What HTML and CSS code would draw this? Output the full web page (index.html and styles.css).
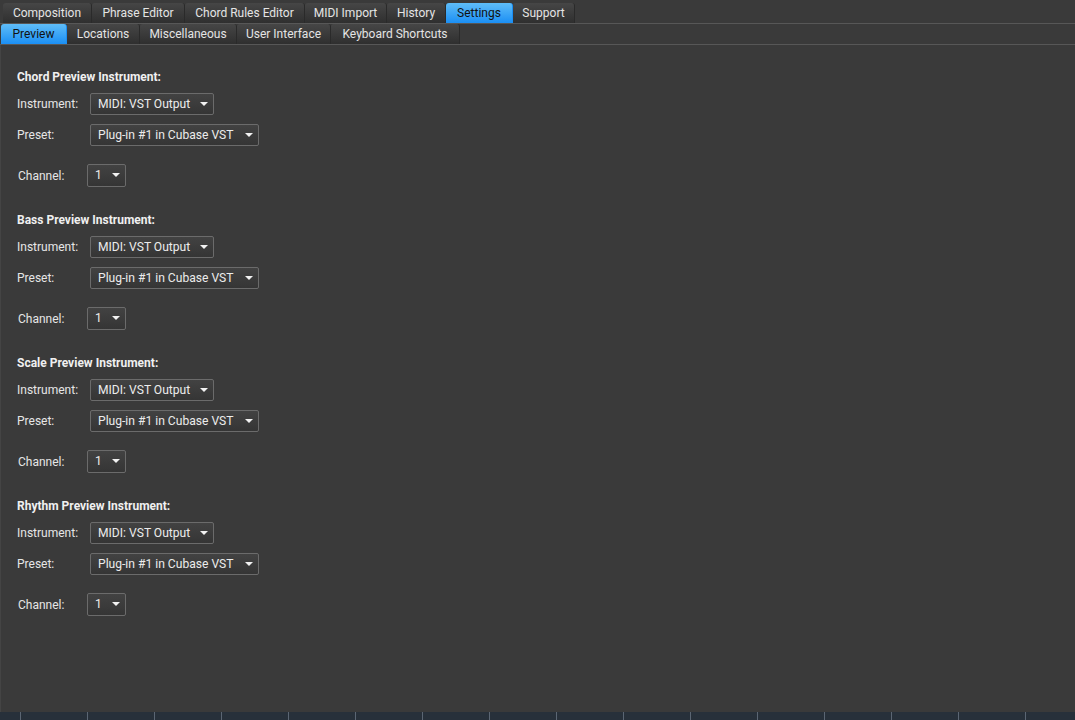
FILE: index.html
```html
<!DOCTYPE html>
<html>
<head>
<meta charset="utf-8">
<link rel="stylesheet" href="styles.css">
</head>
<body>
<div class="app">
  <div class="tabbar main-tabs">
    <div class="tab">Composition</div>
    <div class="tab">Phrase Editor</div>
    <div class="tab">Chord Rules Editor</div>
    <div class="tab">MIDI Import</div>
    <div class="tab">History</div>
    <div class="tab active">Settings</div>
    <div class="tab">Support</div>
  </div>
  <div class="tabbar sub-tabs">
    <div class="tab active first">Preview</div>
    <div class="tab">Locations</div>
    <div class="tab">Miscellaneous</div>
    <div class="tab">User Interface</div>
    <div class="tab">Keyboard Shortcuts</div>
  </div>
  <div class="content">
    <section class="group">
      <h3 class="group-title">Chord Preview Instrument:</h3>
      <div class="row row-inst"><span class="label">Instrument:</span><div class="select w-inst">MIDI: VST Output</div></div>
      <div class="row row-preset"><span class="label">Preset:</span><div class="select w-preset">Plug-in #1 in Cubase VST</div></div>
      <div class="row row-channel"><span class="label ch">Channel:</span><div class="select w-ch">1</div></div>
    </section>
    <section class="group">
      <h3 class="group-title">Bass Preview Instrument:</h3>
      <div class="row row-inst"><span class="label">Instrument:</span><div class="select w-inst">MIDI: VST Output</div></div>
      <div class="row row-preset"><span class="label">Preset:</span><div class="select w-preset">Plug-in #1 in Cubase VST</div></div>
      <div class="row row-channel"><span class="label ch">Channel:</span><div class="select w-ch">1</div></div>
    </section>
    <section class="group">
      <h3 class="group-title">Scale Preview Instrument:</h3>
      <div class="row row-inst"><span class="label">Instrument:</span><div class="select w-inst">MIDI: VST Output</div></div>
      <div class="row row-preset"><span class="label">Preset:</span><div class="select w-preset">Plug-in #1 in Cubase VST</div></div>
      <div class="row row-channel"><span class="label ch">Channel:</span><div class="select w-ch">1</div></div>
    </section>
    <section class="group">
      <h3 class="group-title">Rhythm Preview Instrument:</h3>
      <div class="row row-inst"><span class="label">Instrument:</span><div class="select w-inst">MIDI: VST Output</div></div>
      <div class="row row-preset"><span class="label">Preset:</span><div class="select w-preset">Plug-in #1 in Cubase VST</div></div>
      <div class="row row-channel"><span class="label ch">Channel:</span><div class="select w-ch">1</div></div>
    </section>
  </div>
  <div class="statusbar">
    <div class="cell lead"></div>
    <div class="cell"></div><div class="cell"></div><div class="cell"></div><div class="cell"></div>
    <div class="cell"></div><div class="cell"></div><div class="cell"></div><div class="cell"></div>
    <div class="cell"></div><div class="cell"></div><div class="cell"></div><div class="cell"></div>
    <div class="cell"></div><div class="cell"></div><div class="cell"></div><div class="cell"></div>
  </div>
</div>
</body>
</html>
```

FILE: styles.css
```css
* { box-sizing: border-box; }
html, body {
  margin: 0;
  padding: 0;
  background: #3a3a3a;
  font-family: Roboto, "Liberation Sans", sans-serif;
  font-size: 12px;
  color: #e6e6e6;
}
.app {
  width: 1075px;
  height: 720px;
  display: flex;
  flex-direction: column;
  overflow: hidden;
}
.tabbar {
  display: flex;
  background: #3a3a3a;
  border-bottom: 1px solid #575757;
}
.main-tabs {
  height: 24px;
  padding-top: 3px;
  padding-left: 3px;
}
.sub-tabs {
  height: 21px;
  padding-left: 1px;
}
.tab {
  display: flex;
  align-items: center;
  justify-content: center;
  padding: 0 10px;
  height: 100%;
  color: #e4e4e4;
  background: linear-gradient(#464646, #2f2f2f);
  border-right: 1px solid #2a2a2a;
  border-radius: 3px 3px 0 0;
  white-space: nowrap;
}
.tab.active {
  background: linear-gradient(#5fbdf8, #1b8ff4);
  color: #111;
  border-right-color: #1b8ff4;
}
.sub-tabs .tab.first { padding: 0 12px; }
.main-tabs .tab:nth-child(1) { width: 89px; }
.main-tabs .tab:nth-child(2) { width: 93px; }
.main-tabs .tab:nth-child(3) { width: 120px; }
.main-tabs .tab:nth-child(4) { width: 82px; }
.main-tabs .tab:nth-child(5) { width: 59px; }
.main-tabs .tab:nth-child(6) { width: 67px; }
.main-tabs .tab:nth-child(7) { width: 62px; }
.sub-tabs .tab:nth-child(1) { width: 66px; }
.sub-tabs .tab:nth-child(2) { width: 73px; }
.sub-tabs .tab:nth-child(3) { width: 97px; }
.sub-tabs .tab:nth-child(4) { width: 94px; }
.sub-tabs .tab:nth-child(5) { width: 129px; }

.content {
  flex: 1;
  background: #3a3a3a;
  border-left: 1px solid #444;
  padding: 24px 0 0 16px;
  display: flex;
  flex-direction: column;
}
.group {
  display: flex;
  flex-direction: column;
  height: 143px;
}
.group-title {
  margin: 0;
  font-size: 12px;
  font-weight: 700;
  color: #f0f0f0;
  height: 16px;
  line-height: 16px;
}
.row {
  display: flex;
  align-items: center;
}
.row-inst { margin-top: 8px; }
.row-preset { margin-top: 9px; }
.row-channel { margin-top: 18px; }
.label {
  width: 73px;
  color: #e6e6e6;
}
.label.ch { width: 70px; padding-left: 1px; }
.select {
  position: relative;
  height: 22px;
  line-height: 20px;
  padding-left: 7px;
  border: 1px solid #6b6b6b;
  border-radius: 2px;
  background: linear-gradient(#424242, #353535);
  color: #ececec;
  font-size: 12.1px;
  white-space: nowrap;
}
.select::after {
  content: "";
  position: absolute;
  right: 5px;
  top: 8px;
  border-left: 4px solid transparent;
  border-right: 4px solid transparent;
  border-top: 4px solid #f2f2f2;
}
.w-inst { width: 124px; }
.w-preset { width: 169px; }
.w-ch { width: 39px; height: 23px; }

.statusbar {
  height: 8px;
  background: #27303a;
  display: flex;
}
.cell {
  width: 67px;
  flex: none;
  border-left: 1px solid #5b6673;
}
.cell.lead {
  width: 20px;
  border-left: none;
}
```
